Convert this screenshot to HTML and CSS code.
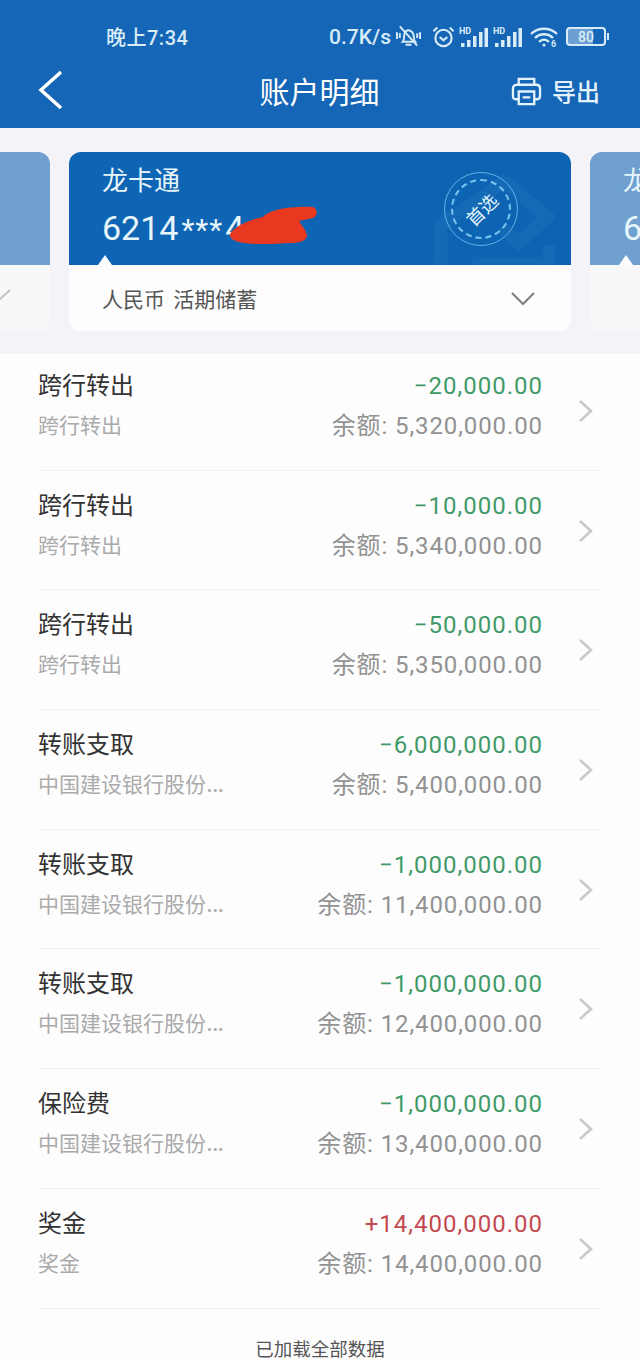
FILE: index.html
```html
<!DOCTYPE html>
<html lang="zh-CN">
<head>
  <meta charset="UTF-8" />
  <meta name="viewport" content="width=device-width, initial-scale=1.0"/>
  <title>账户明细</title>
  <link rel="stylesheet" href="styles.css">
</head>
<body>
  <header class="header">
    <div class="status-bar">
      <span class="status-time">晚上7:34</span>
      <div class="status-right">
        <span class="status-speed">0.7K/s</span>
        <svg class="st-bell" width="27" height="26" viewBox="0 0 28 26" fill="none" stroke="#d8ecf8" stroke-width="2">
          <path d="M8 18c2-2 1-6 2-9 1-2 3-3 4-3s4 1 5 4c1 3 0 6 2 8z"/>
          <path d="M11 21h6M5 2l18 20M2 8v7M5 9v5M26 8v7M23 9v5"/>
        </svg>
        <svg class="st-alarm" width="23" height="24" viewBox="0 0 24 24" fill="none" stroke="#d8ecf8" stroke-width="2.2">
          <circle cx="12" cy="13" r="8.5"/>
          <path d="M8 12l4 3.5 4-3.5M1.5 6l4-4M22.500 6l-4-4"/>
        </svg>
        <svg class="st-signal" width="30" height="24" viewBox="0 0 30 24" fill="#d8ecf8">
          <text x="0" y="9" class="st-hd">HD</text>
          <rect x="2" y="18" width="3.500" height="4"/>
          <rect x="8" y="15" width="3.500" height="7"/>
          <rect x="14" y="11" width="3.500" height="11"/>
          <rect x="20" y="7" width="3.500" height="15"/>
          <rect x="25.500" y="3" width="3.500" height="19"/>
        </svg>
        <svg class="st-signal" width="30" height="24" viewBox="0 0 30 24" fill="#d8ecf8">
          <text x="0" y="9" class="st-hd">HD</text>
          <rect x="2" y="18" width="3.500" height="4"/>
          <rect x="8" y="15" width="3.500" height="7"/>
          <rect x="14" y="11" width="3.500" height="11"/>
          <rect x="20" y="7" width="3.500" height="15"/>
          <rect x="25.500" y="3" width="3.500" height="19"/>
        </svg>
        <svg class="st-wifi" width="28" height="24" viewBox="0 0 28 24" fill="none" stroke="#d8ecf8" stroke-width="2.4">
          <path d="M1 9c7-7 19-7 26 0M5 13c5-5 13-5 18 0M9 17c3-3 7-3 10 0"/>
          <circle cx="14" cy="20" r="1.500" fill="#d8ecf8" stroke="none"/>
          <text x="21" y="22" class="st-six" fill="#d8ecf8" stroke="none">6</text>
        </svg>
        <div class="battery"><span class="battery-level">80</span></div>
      </div>
    </div>
    <div class="nav-bar">
      <svg class="back" width="26" height="40" viewBox="0 0 26 40" fill="none" stroke="#fff" stroke-width="3.500">
        <path d="M23 2L3 20l20 18"/>
      </svg>
      <h1 class="nav-title">账户明细</h1>
      <div class="export">
        <svg class="export-icon" width="31" height="31" viewBox="0 0 32 32" fill="none" stroke="#e4f2fb" stroke-width="2.400">
          <path d="M8 9V3h16v6"/>
          <path d="M8 24H5c-2 0-3-1-3-3v-8c0-2 1-4 4-4h20c3 0 4 2 4 4v8c0 2-1 3-3 3h-3"/>
          <path d="M8 16h16v13H8zM12 22h8"/>
        </svg>
        <span>导出</span>
      </div>
    </div>
  </header>

  <section class="cards">
    <div class="card card-side">
      <div class="card-top"></div>
      <div class="card-bottom">
        <svg class="side-check" width="14" height="14" viewBox="0 0 14 14" fill="none" stroke="#c4c4c4" stroke-width="2"><path d="M0 12l12-11"/></svg>
      </div>
    </div>
    <div class="card card-main">
      <div class="card-top">
        <div class="card-name">龙卡通</div>
        <div class="card-number">6214<span class="stars">***</span>4</div>
        <svg class="scribble" width="92" height="40" viewBox="0 0 92 40">
          <path d="M3 28C8 20 22 14 36 11 42 4 62 0 86 1c5 2 5 9 0 11l-14 3c3 5 8 10 8 15-1 5-8 7-16 7-18 1-40 2-52-1C7 35 2 32 3 28z" fill="#e8381f"/>
        </svg>
        <svg class="watermark" width="122" height="90" viewBox="0 0 122 90" fill="none" stroke="#2a78bd" stroke-width="13" opacity="0.3">
          <path d="M8 90V50L72 6l42 36-28 26-18-16M40 90h76V70"/>
        </svg>
        <div class="stamp"><span class="stamp-text">首选</span></div>
      </div>
      <div class="card-pointer"></div>
      <div class="card-bottom">
        <span class="card-type">人民币 活期储蓄</span>
        <svg class="card-toggle" width="24" height="14" viewBox="0 0 24 14" fill="none" stroke="#7d7d7d" stroke-width="2"><path d="M1 1l11 11L23 1"/></svg>
      </div>
    </div>
    <div class="card card-side">
      <div class="card-top">
        <div class="side-name">龙</div>
        <div class="side-number">6</div>
      </div>
      <div class="card-pointer"></div>
      <div class="card-bottom"></div>
    </div>
  </section>

  <ul class="list">
    <li class="row">
      <div class="row-left"><div class="row-title">跨行转出</div><div class="row-sub">跨行转出</div></div>
      <div class="row-right"><div class="amount out">−20,000.00</div><div class="balance">余额: 5,320,000.00</div></div>
      <svg class="arrow" width="16" height="24" viewBox="0 0 16 24" fill="none" stroke="#c9c9c9" stroke-width="2.600"><path d="M2 2l11 10L2 22"/></svg>
    </li>
    <li class="row">
      <div class="row-left"><div class="row-title">跨行转出</div><div class="row-sub">跨行转出</div></div>
      <div class="row-right"><div class="amount out">−10,000.00</div><div class="balance">余额: 5,340,000.00</div></div>
      <svg class="arrow" width="16" height="24" viewBox="0 0 16 24" fill="none" stroke="#c9c9c9" stroke-width="2.600"><path d="M2 2l11 10L2 22"/></svg>
    </li>
    <li class="row">
      <div class="row-left"><div class="row-title">跨行转出</div><div class="row-sub">跨行转出</div></div>
      <div class="row-right"><div class="amount out">−50,000.00</div><div class="balance">余额: 5,350,000.00</div></div>
      <svg class="arrow" width="16" height="24" viewBox="0 0 16 24" fill="none" stroke="#c9c9c9" stroke-width="2.600"><path d="M2 2l11 10L2 22"/></svg>
    </li>
    <li class="row">
      <div class="row-left"><div class="row-title">转账支取</div><div class="row-sub">中国建设银行股份<span class="dots">…</span></div></div>
      <div class="row-right"><div class="amount out">−6,000,000.00</div><div class="balance">余额: 5,400,000.00</div></div>
      <svg class="arrow" width="16" height="24" viewBox="0 0 16 24" fill="none" stroke="#c9c9c9" stroke-width="2.600"><path d="M2 2l11 10L2 22"/></svg>
    </li>
    <li class="row">
      <div class="row-left"><div class="row-title">转账支取</div><div class="row-sub">中国建设银行股份<span class="dots">…</span></div></div>
      <div class="row-right"><div class="amount out">−1,000,000.00</div><div class="balance">余额: 11,400,000.00</div></div>
      <svg class="arrow" width="16" height="24" viewBox="0 0 16 24" fill="none" stroke="#c9c9c9" stroke-width="2.600"><path d="M2 2l11 10L2 22"/></svg>
    </li>
    <li class="row">
      <div class="row-left"><div class="row-title">转账支取</div><div class="row-sub">中国建设银行股份<span class="dots">…</span></div></div>
      <div class="row-right"><div class="amount out">−1,000,000.00</div><div class="balance">余额: 12,400,000.00</div></div>
      <svg class="arrow" width="16" height="24" viewBox="0 0 16 24" fill="none" stroke="#c9c9c9" stroke-width="2.600"><path d="M2 2l11 10L2 22"/></svg>
    </li>
    <li class="row">
      <div class="row-left"><div class="row-title">保险费</div><div class="row-sub">中国建设银行股份<span class="dots">…</span></div></div>
      <div class="row-right"><div class="amount out">−1,000,000.00</div><div class="balance">余额: 13,400,000.00</div></div>
      <svg class="arrow" width="16" height="24" viewBox="0 0 16 24" fill="none" stroke="#c9c9c9" stroke-width="2.600"><path d="M2 2l11 10L2 22"/></svg>
    </li>
    <li class="row">
      <div class="row-left"><div class="row-title">奖金</div><div class="row-sub">奖金</div></div>
      <div class="row-right"><div class="amount in">+14,400,000.00</div><div class="balance">余额: 14,400,000.00</div></div>
      <svg class="arrow" width="16" height="24" viewBox="0 0 16 24" fill="none" stroke="#c9c9c9" stroke-width="2.600"><path d="M2 2l11 10L2 22"/></svg>
    </li>
  </ul>

  <p class="loaded">已加载全部数据</p>
</body>
</html>
```

FILE: styles.css
```css
body {
  margin: 0;
  height: 1361px;
  overflow: hidden;
  background-color: #fefdfe;
  font-family: Roboto, "Noto Sans CJK SC", sans-serif;
  color: #333;
}

.header {
  height: 128px;
  background-color: #1566b6;
  color: #fff;
}

.status-bar {
  height: 43px;
  padding: 15px 34px 0 106px;
  display: flex;
  justify-content: space-between;
  align-items: center;
  color: #d8ecf8;
}

.status-time {
  font-size: 20px;
  font-weight: 500;
  letter-spacing: 0.5px;
}

.status-right {
  display: flex;
  align-items: center;
  gap: 4px;
}

.status-speed {
  font-size: 21px;
  font-weight: 500;
}

.st-alarm { margin-left: 6px; }
.st-wifi { margin-left: 3px; }
.st-hd { font-size: 9px; font-weight: 700; }
.st-six { font-size: 9px; font-weight: 700; }

.battery {
  width: 36px;
  height: 15px;
  border: 2px solid #d8ecf8;
  border-radius: 4px;
  margin-left: 4px;
  display: flex;
  align-items: center;
  justify-content: center;
  position: relative;
  background: linear-gradient(to right, #6c9fd2 70%, transparent 70%);
}

.battery::after {
  content: "";
  position: absolute;
  right: -5px;
  top: 4px;
  width: 2px;
  height: 7px;
  background: #d8ecf8;
}

.battery-level {
  font-size: 14px;
  font-weight: 500;
  line-height: 1;
}

.nav-bar {
  height: 64px;
  display: flex;
  align-items: center;
  justify-content: space-between;
  padding: 0 40px 0 38px;
}

.back { display: block; }

.nav-title {
  margin: 0 0 0 64px;
  font-size: 30px;
  font-weight: 400;
}

.export {
  display: flex;
  align-items: center;
  gap: 10px;
  font-size: 24px;
  font-weight: 500;
  color: #e4f2fb;
}

.export-icon { margin-top: 3px; }

.cards {
  height: 226px;
  padding-top: 24px;
  box-sizing: border-box;
  background-color: #f4f3f7;
  display: flex;
  gap: 19px;
  justify-content: center;
}

.card {
  flex: none;
  width: 502px;
  height: 179px;
  border-radius: 12px;
  overflow: hidden;
  position: relative;
  background-color: #fefdfe;
}

.card-top {
  height: 113px;
  box-sizing: border-box;
  padding: 12px 33px 0;
  background-color: #0d65b3;
  color: #e8f6fb;
  position: relative;
  overflow: hidden;
}

.card-side { background-color: #f8f7fa; }
.card-side .card-top { background-color: #6fa0d0; }

.card-name {
  font-size: 26px;
  line-height: 34px;
}

.card-number {
  font-size: 34px;
  line-height: 44px;
  margin-top: 8px;
}

.stars {
  font-size: 30px;
  letter-spacing: 1px;
  margin: 0 2px 0 3px;
}

/* red scribble hiding the end of the card number */
.scribble {
  position: absolute;
  left: 158px;
  top: 54px;
}

.watermark {
  position: absolute;
  right: 16px;
  bottom: 0;
}

.stamp {
  position: absolute;
  right: 53px;
  top: 20px;
  width: 72px;
  height: 72px;
  border: 1.5px solid #62b2e6;
  border-radius: 50%;
  display: flex;
  align-items: center;
  justify-content: center;
}

.stamp::before {
  content: "";
  position: absolute;
  inset: 6px;
  border: 2px dashed #7cc3ee;
  border-radius: 50%;
}

.stamp-text {
  font-size: 18px;
  transform: rotate(-45deg);
  color: #e2f4fb;
}

.card-pointer {
  position: absolute;
  left: 29px;
  top: 103px;
  width: 0;
  height: 0;
  border-left: 7px solid transparent;
  border-right: 7px solid transparent;
  border-bottom: 10px solid #fefdfe;
}

.card-bottom {
  height: 66px;
  padding: 0 36px 0 33px;
  display: flex;
  align-items: center;
  justify-content: space-between;
}

.card-type {
  font-size: 21px;
  word-spacing: 3px;
  color: #555;
}

.card-toggle { margin-top: 2px; }

.side-name {
  font-size: 26px;
  line-height: 34px;
}

.side-number {
  font-size: 34px;
  line-height: 44px;
  margin-top: 8px;
}

.side-check {
  position: absolute;
  right: 38px;
  top: 137px;
}

.list {
  list-style: none;
  margin: 0;
  padding: 0 38px;
}

.row {
  height: 119.7px;
  box-sizing: border-box;
  border-bottom: 1px solid #f2f1f4;
  display: flex;
  position: relative;
  padding-top: 18px;
}

.row:first-child {
  height: 116.7px;
  padding-top: 15px;
}

.row:first-child .arrow { top: 45px; }

.row-left { flex: 1; }

.row-title {
  font-size: 24px;
  line-height: 34px;
  color: #333;
}

.row-sub {
  font-size: 21px;
  line-height: 34px;
  margin-top: 6px;
  color: #aaa;
}

.dots {
  font-size: 27px;
  line-height: 1;
}

.row-right {
  text-align: right;
  margin-right: 59px;
}

.amount {
  font-size: 24px;
  line-height: 34px;
  letter-spacing: 1px;
}

.amount.out { color: #3f9a68; }
.amount.in { color: #c2494f; }

.balance {
  font-size: 24px;
  line-height: 34px;
  margin-top: 6px;
  letter-spacing: 0.9px;
  color: #929292;
}

.arrow {
  position: absolute;
  right: 8px;
  top: 48px;
}

.loaded {
  margin: 27px 0 0;
  text-align: center;
  font-size: 18.5px;
  line-height: 28px;
  color: #555;
}
```
